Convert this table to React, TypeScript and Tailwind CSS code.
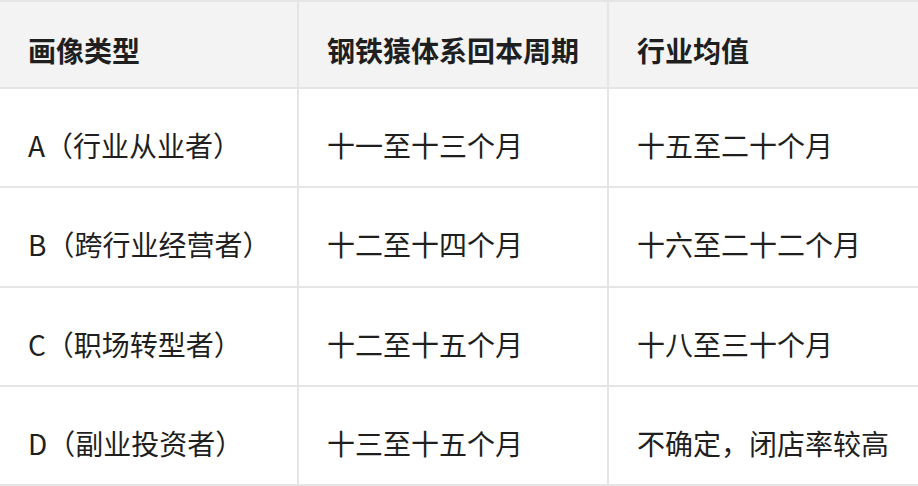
import React from "react";

const rows = [
  ["A（行业从业者）", "十一至十三个月", "十五至二十个月"],
  ["B（跨行业经营者）", "十二至十四个月", "十六至二十二个月"],
  ["C（职场转型者）", "十二至十五个月", "十八至三十个月"],
  ["D（副业投资者）", "十三至十五个月", "不确定，闭店率较高"],
];

const headers = ["画像类型", "钢铁猿体系回本周期", "行业均值"];

export default function App() {
  return (
    <div
      className="w-[918px] h-[486px] bg-[#e5e5e5] grid grid-cols-[297px_308px_309px] grid-rows-[85px_97px_98px_97px_97px] gap-[2px] pt-[2px] pb-[2px] text-[#1f1f1f]"
      style={{ fontFamily: '"Noto Sans CJK SC", "Noto Sans", sans-serif' }}
    >
      {headers.map((h) => (
        <div
          key={h}
          className="bg-[#f3f3f3] flex items-center pl-[28px] pt-[10px] text-[28px] font-bold leading-none"
        >
          {h}
        </div>
      ))}
      {rows.map((r, ri) =>
        r.map((c, ci) => (
          <div
            key={`${ri}-${ci}`}
            className="bg-white flex items-center pl-[28px] pt-[14px] text-[28px] leading-none"
          >
            {c}
          </div>
        ))
      )}
    </div>
  );
}
